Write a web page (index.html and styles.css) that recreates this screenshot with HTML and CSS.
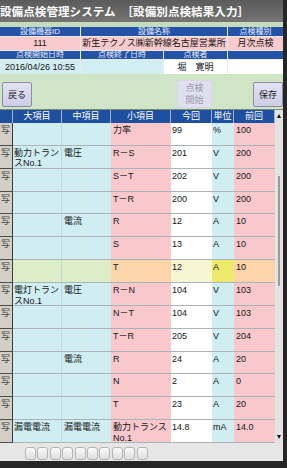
FILE: index.html
```html
<!DOCTYPE html>
<html lang="ja">
<head>
    <meta charset="UTF-8">
    <meta name="viewport" content="width=device-width, initial-scale=1.0">
    <title>設備別点検結果入力</title>
    <link rel="stylesheet" href="styles.css">
</head>
<body>
    <div class="screen">
        <div class="titlebar">設備点検管理システム　［設備別点検結果入力］</div>

        <div class="info">
            <div class="info-row info-row--a info-row--head">
                <div>設備機器ID</div>
                <div>設備名称</div>
                <div>点検種別</div>
            </div>
            <div class="info-row info-row--a info-row--pink">
                <div>111</div>
                <div>新生テクノス㈱新幹線名古屋営業所</div>
                <div>月次点検</div>
            </div>
            <div class="info-row info-row--b info-row--head">
                <div>点検開始日時</div>
                <div>点検終了日時</div>
                <div>点検者</div>
                <div></div>
            </div>
            <div class="info-row info-row--b info-row--data">
                <div class="cell-blue">2016/04/26 10:55</div>
                <div class="cell-blue"></div>
                <div>堀　寛明</div>
                <div></div>
            </div>
        </div>

        <div class="actions">
            <button class="btn">戻る</button>
            <button class="btn btn--start" disabled>点検<br>開始</button>
            <button class="btn">保存</button>
        </div>

        <div class="results">
            <div class="results__table">
                <div class="row row--head">
                    <div></div>
                    <div>大項目</div>
                    <div>中項目</div>
                    <div>小項目</div>
                    <div>今回</div>
                    <div>単位</div>
                    <div>前回</div>
                </div>
                <div id="rows"></div>
            </div>
            <div class="scrollbar">
                <span class="scrollbar__up"></span>
                <span class="scrollbar__thumb"></span>
                <span class="scrollbar__down"></span>
            </div>
        </div>

        <div class="footer">
            <span class="key"></span><span class="key"></span><span class="key"></span><span class="key"></span><span class="key"></span>
            <span class="key"></span><span class="key"></span><span class="key"></span><span class="key"></span><span class="key"></span>
        </div>
    </div>

    <script>
        const items = [
            ['', '', '力率', '99', '%', '100'],
            ['動力トランスNo.1', '電圧', 'R－S', '201', 'V', '200'],
            ['', '', 'S－T', '202', 'V', '200'],
            ['', '', 'T－R', '200', 'V', '200'],
            ['', '電流', 'R', '12', 'A', '10'],
            ['', '', 'S', '13', 'A', '10'],
            ['', '', 'T', '12', 'A', '10', 'warn'],
            ['電灯トランスNo.1', '電圧', 'R－N', '104', 'V', '103'],
            ['', '', 'N－T', '104', 'V', '103'],
            ['', '', 'T－R', '205', 'V', '204'],
            ['', '電流', 'R', '24', 'A', '20'],
            ['', '', 'N', '2', 'A', '0'],
            ['', '', 'T', '23', 'A', '20'],
            ['漏電電流', '漏電電流', '動力トランスNo.1', '14.8', 'mA', '14.0']
        ];

        const rows = document.getElementById('rows');

        items.forEach(item => {
            const row = document.createElement('div');
            row.className = 'row' + (item[6] ? ' row--' + item[6] : '');
            row.innerHTML =
                '<div class="photo"><span>写</span></div>' +
                item.slice(0, 6).map(text => '<div>' + text + '</div>').join('');
            rows.appendChild(row);
        });
    </script>
</body>
</html>
```

FILE: styles.css
```css
* {
    margin: 0;
    padding: 0;
    box-sizing: border-box;
}

body {
    background-color: #262626;
    font-family: "Liberation Sans", "Noto Sans CJK JP", sans-serif;
    color: #151515;
}

.screen {
    width: 283px;
    height: 461px;
    display: flex;
    flex-direction: column;
    background-color: #cfe5c6;
    overflow: hidden;
}

.titlebar {
    height: 22px;
    background: linear-gradient(#5b5b5b, #747474);
    color: #fff;
    font-family: "Noto Sans CJK JP", sans-serif;
    font-weight: bold;
    font-size: 11.5px;
    line-height: 22px;
    white-space: nowrap;
    letter-spacing: 0.1px;
}

/* header block with equipment info */
.info {
    display: flex;
    flex-direction: column;
    gap: 1px;
    border-top: 5px solid #c4dbbd;
    background-color: #e6ede2;
}

.info-row {
    display: grid;
    gap: 1px;
    text-align: center;
    white-space: nowrap;
    overflow: hidden;
}

.info-row--a { grid-template-columns: 80px 146px 1fr; }
.info-row--b { grid-template-columns: 80px 82px 63px 1fr; }

.info-row--head {
    height: 9px;
    font-size: 8px;
    line-height: 9px;
    color: #e8eeff;
}

.info-row--head div { background-color: #2352a6; }
.info-row--b.info-row--head { height: 8px; line-height: 8px; }

.info-row--pink {
    height: 13px;
    font-size: 9px;
    line-height: 13px;
}

.info-row--pink div { background-color: #f8c9cd; }

.info-row--data {
    height: 14px;
    font-size: 9px;
    line-height: 14px;
}

.info-row--data div { background-color: #fff; }
.info-row--data .cell-blue { background-color: #d3eef2; }

/* buttons bar */
.actions {
    height: 35px;
    display: flex;
    align-items: flex-start;
    padding: 6px 0 0 2px;
}

.btn {
    width: 30px;
    height: 25px;
    margin-top: 2px;
    border: 1px solid #8c8ca4;
    border-radius: 2px;
    background: linear-gradient(#e2e2f2, #cdcde6);
    font-family: "Noto Sans CJK JP", sans-serif;
    font-size: 9px;
    line-height: 12px;
    color: #1a1a1a;
}

.btn--start {
    width: 35px;
    height: 28px;
    margin: 0 41px 0 auto;
    border-color: #d6d6e6;
    background: #dfdff0;
    color: #9a9aa6;
}

/* results grid */
.results {
    display: flex;
    border-top: 1px solid #7a8a7a;
}

.results__table {
    width: 275px;
}

.row {
    display: grid;
    grid-template-columns: 13px 49px 49px 60px 41px 22px 41px;
    height: 22.86px;
    font-size: 9px;
    line-height: 10.5px;
}

.row > div {
    padding: 2px 1px 0 2px;
    border-bottom: 1px solid #aab4b8;
    overflow: hidden;
}

.row > div:nth-child(2),
.row > div:nth-child(3) { background-color: #d0edf2; }
.row > div:nth-child(2) { border-right: 1px solid #bcd8dc; padding-left: 1px; }
.row > div:nth-child(4),
.row > div:nth-child(7) { background-color: #f9c8cd; }
.row > div:nth-child(5) { background-color: #fff; padding-left: 1px; }
.row > div:nth-child(6) { background-color: #d0edf2; padding-left: 1px; }

.row--warn > div:nth-child(2),
.row--warn > div:nth-child(3) { background-color: #dcedc8; }
.row--warn > div:nth-child(4),
.row--warn > div:nth-child(7) { background-color: #fbd4a9; }
.row--warn > div:nth-child(5) { background-color: #f6f6d2; }
.row--warn > div:nth-child(6) { background-color: #ece96c; }

.row--head {
    height: 13px;
    line-height: 12px;
    color: #fff;
    font-family: "Noto Sans CJK JP", sans-serif;
}

.row--head > div,
.row--head > div:nth-child(n) {
    padding: 0;
    text-align: center;
    background-color: #1f4f9f;
    border-bottom: 0;
    border-right: 1px solid #9fb3d6;
}

.row > .photo {
    padding: 2px 0 0;
    background-color: #d3cfc7;
    border-right: 1px solid #3c3c3c;
    border-bottom: 1px solid #4e4e4e;
    color: #444;
}

.photo span {
    display: block;
    margin-left: 1px;
}

/* scrollbar strip */
.scrollbar {
    width: 8px;
    display: flex;
    flex-direction: column;
    align-items: center;
    background-color: #e3e3e3;
}

.scrollbar__up,
.scrollbar__down {
    width: 0;
    height: 0;
    border-left: 2.5px solid transparent;
    border-right: 2.5px solid transparent;
}

.scrollbar__up {
    margin-top: 4px;
    border-bottom: 4px solid #111;
}

.scrollbar__thumb {
    width: 2px;
    height: 110px;
    margin-top: 58px;
    background-color: #9a9a9a;
}

.scrollbar__down {
    margin-top: auto;
    margin-bottom: 4px;
    border-top: 4px solid #111;
}

/* bottom strip */
.footer {
    flex: 1;
    display: flex;
    gap: 1.4px;
    padding: 4px 0 0 25px;
    background-color: #e6e6e6;
}

.key {
    width: 11px;
    height: 13px;
    border: 1px solid #b4b4b4;
    border-radius: 3px;
    background: linear-gradient(#fafafa, #dedede);
}
```
